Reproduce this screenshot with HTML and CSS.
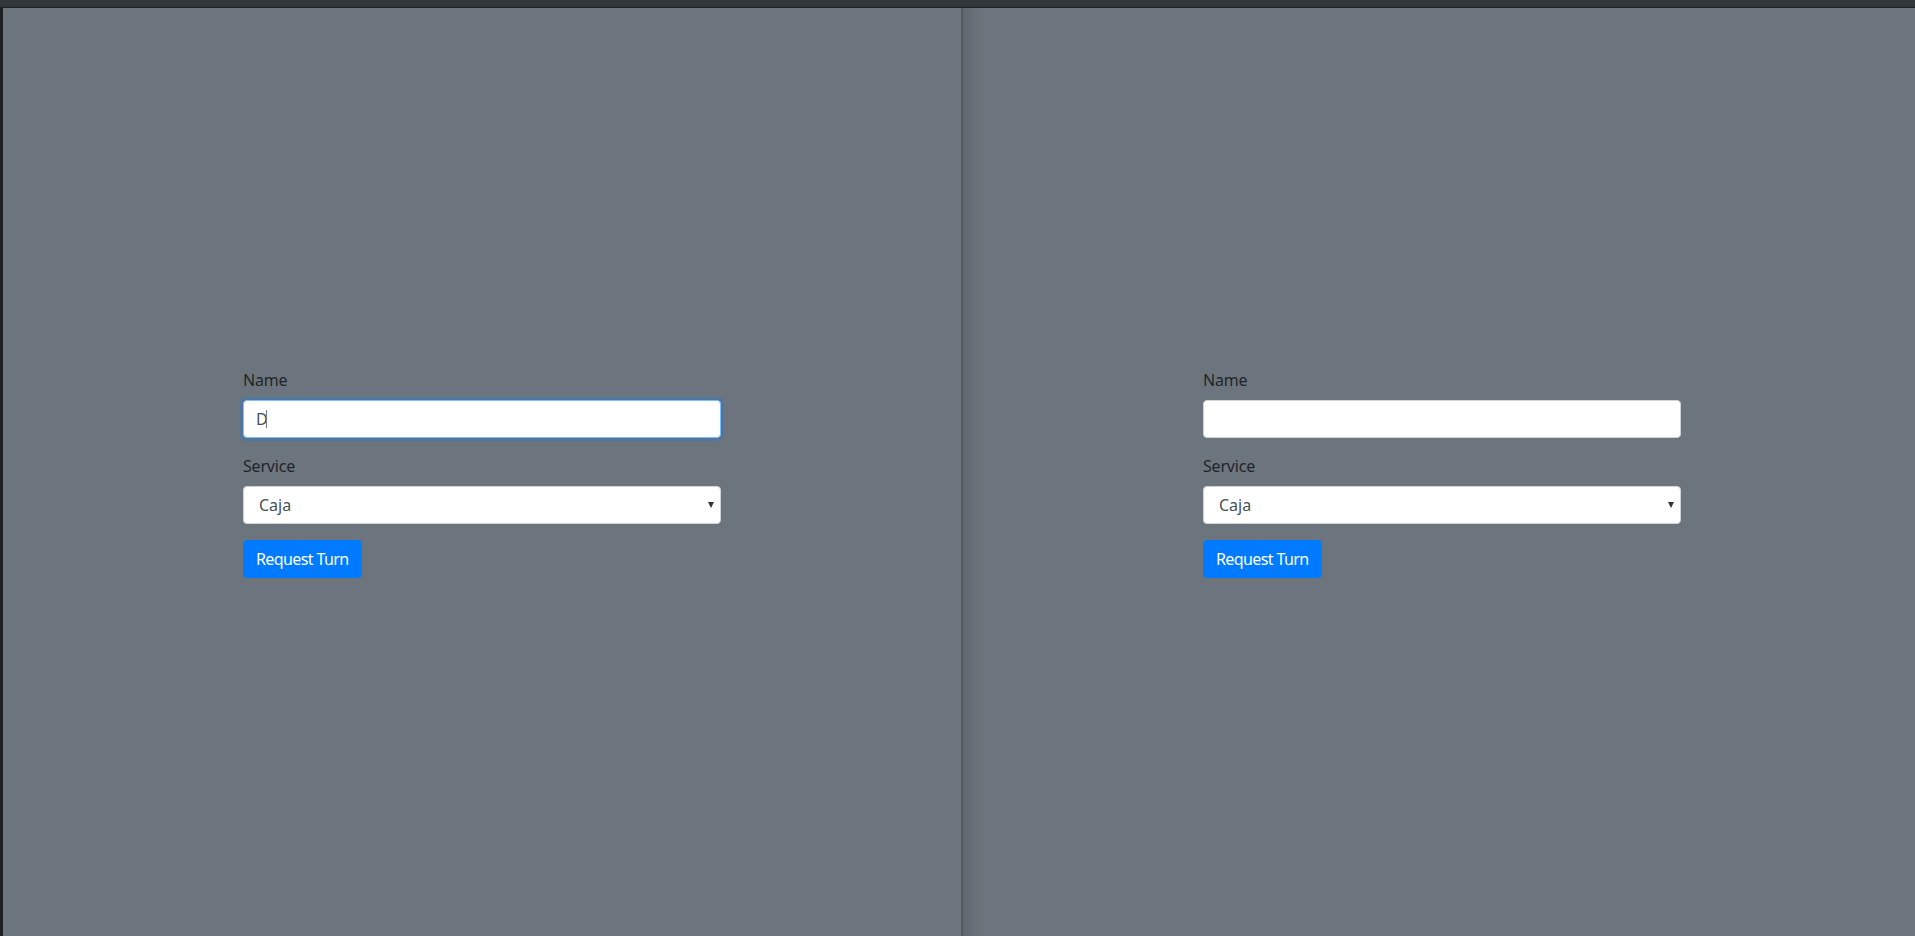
FILE: index.html
```html
<!DOCTYPE html>
<html lang="en">
<head>
<meta charset="utf-8">
<title>Request Turn</title>
<link rel="stylesheet" href="styles.css">
</head>
<body>
<div class="screen">
  <div class="topbar"></div>
  <div class="main">
    <div class="edge"></div>
    <section class="pane pane-left">
      <form class="turn-form">
        <div class="form-group">
          <label class="form-label">Name</label>
          <div class="input-wrap">
            <input class="form-control is-focused" type="text" value="D">
            <span class="caret"></span>
          </div>
        </div>
        <div class="form-group">
          <label class="form-label">Service</label>
          <div class="select-wrap">
            <select class="form-control form-select"><option>Caja</option></select>
          </div>
        </div>
        <button type="button" class="btn-primary">Request Turn</button>
      </form>
    </section>
    <div class="divider"></div>
    <section class="pane pane-right">
      <form class="turn-form">
        <div class="form-group">
          <label class="form-label">Name</label>
          <div class="input-wrap">
            <input class="form-control" type="text" value="">
          </div>
        </div>
        <div class="form-group">
          <label class="form-label">Service</label>
          <div class="select-wrap">
            <select class="form-control form-select"><option>Caja</option></select>
          </div>
        </div>
        <button type="button" class="btn-primary">Request Turn</button>
      </form>
    </section>
  </div>
</div>
</body>
</html>
```

FILE: styles.css
```css
* { box-sizing: border-box; }
html, body { margin: 0; height: 100%; }
body {
  font-family: "Noto Sans", "Open Sans", sans-serif;
  font-size: 16px;
  line-height: 1.5;
  color: #212529;
  background: #6c757d;
  overflow: hidden;
}
.screen {
  display: flex;
  flex-direction: column;
  height: 936px;
}
.topbar {
  height: 8px;
  background: #32373b;
  border-bottom: 1px solid #1f2326;
  flex: none;
}
.main {
  flex: 1;
  display: flex;
  min-height: 0;
}
.edge {
  width: 3px;
  background: #1d2023;
  flex: none;
}
.pane {
  display: flex;
  align-items: center;
  justify-content: center;
  background: #6c757d;
  padding-top: 2px;
}
.pane-left {
  width: 958px;
  flex: none;
}
.pane-right {
  flex: 1;
  padding-left: 6px;
  background: linear-gradient(to right, #61686f 0px, #686f76 10px, #6c757d 22px);
}
.divider {
  width: 2px;
  flex: none;
  background: #56595c;
}
.turn-form {
  width: 478px;
}
.form-group {
  margin-bottom: 16px;
}
.form-label {
  display: block;
  margin-bottom: 8px;
  line-height: 24px;
  color: #212529;
  letter-spacing: -0.2px;
}
.input-wrap, .select-wrap {
  position: relative;
}
.form-control {
  display: block;
  width: 100%;
  height: 38px;
  padding: 6px 12px;
  font-family: inherit;
  font-size: 16px;
  line-height: 1.5;
  color: #495057;
  background: #fff;
  border: 1px solid #ced4da;
  border-radius: 4px;
  outline: none;
  margin: 0;
}
.form-control.is-focused {
  border-color: #80bdff;
  box-shadow: 0 0 0 3px rgba(0, 123, 255, 0.25);
}
.caret {
  position: absolute;
  left: 23px;
  top: 10px;
  width: 1px;
  height: 18px;
  background: #6b7b95;
}
.form-select {
  appearance: none;
  -webkit-appearance: none;
  padding-left: 15px;
}
.select-wrap::after {
  content: "";
  position: absolute;
  right: 7px;
  top: 16px;
  border-left: 3px solid transparent;
  border-right: 3px solid transparent;
  border-top: 6px solid #333;
  pointer-events: none;
}
.btn-primary {
  display: inline-block;
  height: 38px;
  padding: 6px 12px;
  font-family: inherit;
  font-size: 16px;
  line-height: 1.5;
  letter-spacing: -0.6px;
  color: #fff;
  background: #007bff;
  border: 1px solid #007bff;
  border-radius: 4px;
  cursor: pointer;
}
```
